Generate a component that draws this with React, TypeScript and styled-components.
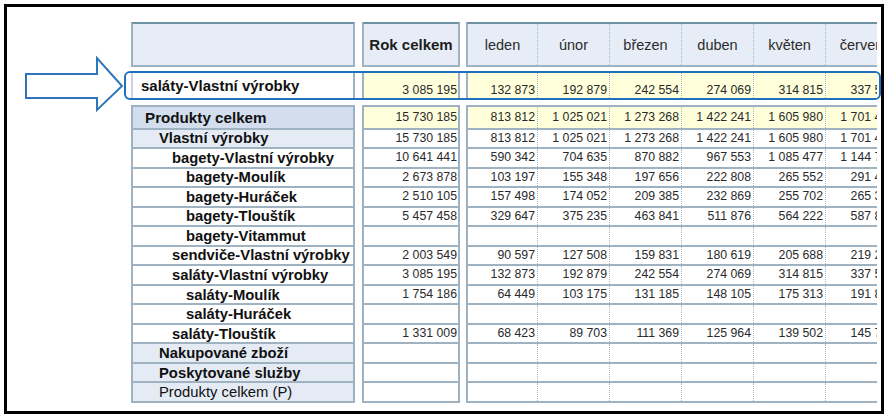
import React from "react";
import styled, { createGlobalStyle } from "styled-components";

const GRID = "#9fb2c1";
const GRID_DARK = "#6f93a4";
const DOT = "#a7bacb";
const HEAD_BG = "#e6edf6";
const BAND_BG = "#d2deee";
const SOFT_BG = "#e4ebf5";
const YELLOW = "#ffffdc";
const BLUE = "#2170bd";

const GlobalStyle = createGlobalStyle`
  html, body { margin: 0; padding: 0; background: #fff; }
  body { font-family: "Liberation Sans", Arial, sans-serif; }
`;

const Frame = styled.div`
  position: relative;
  box-sizing: border-box;
  width: 880px;
  height: 410px;
  margin: 4px;
  border: 3px solid #000;
  padding: 15px 0 0 117px;
  overflow: hidden;
`;

const Pointer = styled.svg`
  position: absolute;
  left: 0;
  top: 0;
`;

const Section = styled.div<{ $top?: number }>`
  margin-left: 7px;
  margin-top: ${(p) => p.$top ?? 0}px;
  width: 746px;
  overflow: hidden;
`;

const Band = styled.div<{ $h: number }>`
  display: flex;
  height: ${(p) => p.$h}px;
`;

/* ---------- header ---------- */
const LabelHead = styled.div`
  flex: 0 0 224px;
  box-sizing: border-box;
  background: ${HEAD_BG};
  border: 2px solid ${GRID};
  border-top-color: ${GRID_DARK};
  margin-right: 7px;
`;

const TotalHead = styled.div`
  flex: 0 0 98px;
  box-sizing: border-box;
  background: ${HEAD_BG};
  border: 2px solid ${GRID};
  border-top-color: ${GRID_DARK};
  margin-right: 6px;
  display: flex;
  align-items: center;
  justify-content: center;
  font-weight: bold;
  font-size: 15px;
  color: #1e1e1e;
`;

const MonthRun = styled.div<{ $bg: string; $top?: boolean; $bottom?: boolean; $topColor?: string }>`
  flex: 0 0 auto;
  display: flex;
  box-sizing: border-box;
  background: ${(p) => p.$bg};
  border-left: 2px solid ${GRID};
  border-top: ${(p) => (p.$top ? `2px solid ${p.$topColor ?? GRID}` : "none")};
  border-bottom: ${(p) => (p.$bottom ? `2px solid ${GRID}` : "none")};
`;

const MonthHead = styled.div<{ $w: number }>`
  flex: 0 0 ${(p) => p.$w}px;
  box-sizing: border-box;
  border-right: 1px dotted ${DOT};
  display: flex;
  align-items: center;
  justify-content: center;
  font-size: 14.5px;
  color: #2c2c2c;
`;

/* ---------- highlighted row ---------- */
const Callout = styled.div`
  margin-top: 4px;
  width: 757px;
  height: 29px;
  box-sizing: border-box;
  border: 2px solid ${BLUE};
  border-radius: 6px;
  padding: 0 2px 0 5px;
`;

const CalloutBand = styled.div`
  display: flex;
  height: 100%;
  overflow: hidden;
`;

const CalloutLabel = styled.div`
  flex: 0 0 224px;
  box-sizing: border-box;
  background: #fff;
  border-left: 2px solid #cfcdf0;
  border-right: 2px solid ${GRID};
  margin-right: 7px;
  padding-left: 8px;
  display: flex;
  align-items: center;
  font-weight: bold;
  font-size: 15px;
  color: #111;
  white-space: nowrap;
`;

/* ---------- body ---------- */
const LabelCell = styled.div<{ $bg: string; $indent: number; $bold: boolean; $top?: boolean; $size: number }>`
  flex: 0 0 224px;
  box-sizing: border-box;
  background: ${(p) => p.$bg};
  border-left: 2px solid ${GRID};
  border-right: 2px solid ${GRID};
  border-bottom: 2px solid ${GRID};
  border-top: ${(p) => (p.$top ? `2px solid ${GRID}` : "none")};
  margin-right: 7px;
  padding-left: ${(p) => p.$indent}px;
  display: flex;
  align-items: center;
  font-weight: ${(p) => (p.$bold ? "bold" : "normal")};
  font-size: ${(p) => p.$size}px;
  color: #111;
  white-space: nowrap;
`;

const TotalCell = styled.div<{ $bg: string; $top?: boolean; $bottom?: boolean; $align: string }>`
  flex: 0 0 98px;
  box-sizing: border-box;
  background: ${(p) => p.$bg};
  border-left: 2px solid ${GRID};
  border-right: 2px solid ${GRID};
  border-bottom: ${(p) => (p.$bottom ? `2px solid ${GRID}` : "none")};
  border-top: ${(p) => (p.$top ? `2px solid ${GRID}` : "none")};
  margin-right: 6px;
  padding: 0 1px 1px 0;
  display: flex;
  align-items: ${(p) => p.$align};
  justify-content: flex-end;
  font-size: 12.3px;
  color: #2a2a2a;
  white-space: nowrap;
`;

const MonthCell = styled.div<{ $w: number; $align: string }>`
  flex: 0 0 ${(p) => p.$w}px;
  box-sizing: border-box;
  border-right: 1px dotted ${DOT};
  padding: 0 2px 1px 0;
  display: flex;
  align-items: ${(p) => p.$align};
  justify-content: flex-end;
  font-size: 12.3px;
  color: #2a2a2a;
  white-space: nowrap;
`;

const MONTHS = ["leden", "únor", "březen", "duben", "květen", "červen"];
const monthWidth = (i: number) => (i === 0 ? 70 : 72);

type Row = {
  label: string;
  level: number;
  bg: string;
  bold?: boolean;
  size?: number;
  total?: string;
  months?: string[];
};

const ROWS: Row[] = [
  { label: "Produkty celkem", level: 0, bg: BAND_BG, size: 15.2, total: "15 730 185", months: ["813 812", "1 025 021", "1 273 268", "1 422 241", "1 605 980", "1 701 436"] },
  { label: "Vlastní výrobky", level: 1, bg: SOFT_BG, total: "15 730 185", months: ["813 812", "1 025 021", "1 273 268", "1 422 241", "1 605 980", "1 701 436"] },
  { label: "bagety-Vlastní výrobky", level: 2, bg: "#fff", total: "10 641 441", months: ["590 342", "704 635", "870 882", "967 553", "1 085 477", "1 144 712"] },
  { label: "bagety-Moulík", level: 3, bg: "#fff", total: "2 673 878", months: ["103 197", "155 348", "197 656", "222 808", "265 552", "291 418"] },
  { label: "bagety-Huráček", level: 3, bg: "#fff", total: "2 510 105", months: ["157 498", "174 052", "209 385", "232 869", "255 702", "265 327"] },
  { label: "bagety-Tlouštík", level: 3, bg: "#fff", total: "5 457 458", months: ["329 647", "375 235", "463 841", "511 876", "564 222", "587 867"] },
  { label: "bagety-Vitammut", level: 3, bg: "#fff" },
  { label: "sendviče-Vlastní výrobky", level: 2, bg: "#fff", total: "2 003 549", months: ["90 597", "127 508", "159 831", "180 619", "205 688", "219 214"] },
  { label: "saláty-Vlastní výrobky", level: 2, bg: "#fff", total: "3 085 195", months: ["132 873", "192 879", "242 554", "274 069", "314 815", "337 510"] },
  { label: "saláty-Moulík", level: 3, bg: "#fff", total: "1 754 186", months: ["64 449", "103 175", "131 185", "148 105", "175 313", "191 804"] },
  { label: "saláty-Huráček", level: 3, bg: "#fff" },
  { label: "saláty-Tlouštík", level: 2, bg: "#fff", total: "1 331 009", months: ["68 423", "89 703", "111 369", "125 964", "139 502", "145 706"] },
  { label: "Nakupované zboží", level: 1, bg: SOFT_BG },
  { label: "Poskytované služby", level: 1, bg: SOFT_BG },
  { label: "Produkty celkem (P)", level: 1, bg: SOFT_BG, bold: false },
];

const INDENT = [12, 26, 39, 53];

const HIGHLIGHT = {
  label: "saláty-Vlastní výrobky",
  total: "3 085 195",
  months: ["132 873", "192 879", "242 554", "274 069", "314 815", "337 510"],
};

export default function App() {
  return (
    <>
      <GlobalStyle />
      <Frame>
        <Pointer width="120" height="110" viewBox="0 0 120 110">
          <polygon
            points="19,67 90,67 90,51 115,79 90,103 90,91 19,91"
            fill="#fff"
            stroke="#2e76bb"
            strokeWidth="2"
            strokeLinejoin="miter"
          />
        </Pointer>

        <Section>
          <Band $h={45}>
            <LabelHead />
            <TotalHead>Rok celkem</TotalHead>
            <MonthRun $bg={HEAD_BG} $top $bottom $topColor={GRID_DARK}>
              {MONTHS.map((m, i) => (
                <MonthHead key={m} $w={monthWidth(i)}>
                  {m}
                </MonthHead>
              ))}
            </MonthRun>
          </Band>
        </Section>

        <Callout>
          <CalloutBand>
            <CalloutLabel>{HIGHLIGHT.label}</CalloutLabel>
            <TotalCell $bg={YELLOW} $align="flex-end">
              {HIGHLIGHT.total}
            </TotalCell>
            <MonthRun $bg={YELLOW}>
              {HIGHLIGHT.months.map((v, i) => (
                <MonthCell key={i} $w={monthWidth(i)} $align="flex-end">
                  {v}
                </MonthCell>
              ))}
            </MonthRun>
          </CalloutBand>
        </Callout>

        <Section $top={5}>
          {ROWS.map((r, idx) => {
            const first = idx === 0;
            const valueBg = first ? YELLOW : "#fff";
            return (
              <Band key={r.label} $h={first ? 24.5 : 19.54}>
                <LabelCell
                  $bg={r.bg}
                  $indent={INDENT[r.level]}
                  $bold={r.bold !== false}
                  $top={first}
                  $size={r.size ?? 14.8}
                >
                  {r.label}
                </LabelCell>
                <TotalCell $bg={valueBg} $top={first} $bottom $align="center">
                  {r.total ?? ""}
                </TotalCell>
                <MonthRun $bg={valueBg} $top={first} $bottom>
                  {MONTHS.map((m, i) => (
                    <MonthCell key={m} $w={monthWidth(i)} $align="center">
                      {r.months ? r.months[i] : ""}
                    </MonthCell>
                  ))}
                </MonthRun>
              </Band>
            );
          })}
        </Section>
      </Frame>
    </>
  );
}
